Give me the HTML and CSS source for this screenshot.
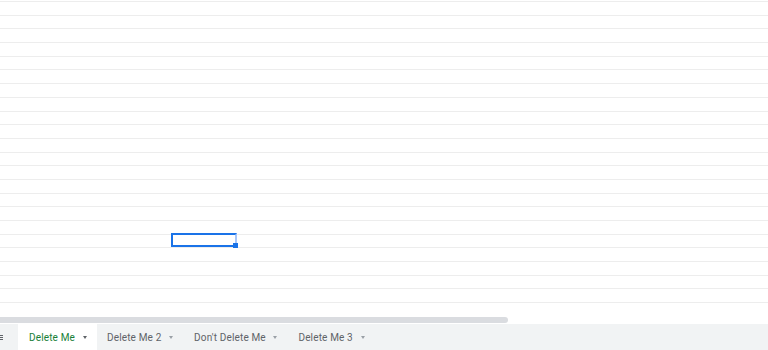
FILE: index.html
```html
<!DOCTYPE html>
<html lang="en">
<head>
    <meta charset="UTF-8">
    <meta name="viewport" content="width=device-width, initial-scale=1.0">
    <title>Sheet tabs</title>
    <link rel="stylesheet" href="styles.css">
</head>
<body>
    <div class="grid" id="grid">
        <!-- rows are added by the script below -->
    </div>

    <div class="scroll-track">
        <div class="scroll-thumb"></div>
    </div>

    <div class="tab-bar">
        <div class="all-sheets">
            <span></span><span></span><span></span>
        </div>
        <div class="tab active">Delete Me <span class="caret"></span></div>
        <div class="tab">Delete Me 2 <span class="caret"></span></div>
        <div class="tab">Don't Delete Me <span class="caret"></span></div>
        <div class="tab">Delete Me 3 <span class="caret"></span></div>
    </div>

    <script>
        // Build the empty grid rows, row 17 holds the selected cell
        const grid = document.getElementById("grid");
        for (let i = 0; i < 23; i++) {
            const row = document.createElement("div");
            row.className = "row";
            if (i === 17) {
                row.innerHTML = '<div class="selected"><span class="handle"></span></div>';
            }
            grid.appendChild(row);
        }
    </script>
</body>
</html>
```

FILE: styles.css
```css
body {
    font-family: Roboto, "Liberation Sans", Arial, sans-serif;
    background-color: #fff;
    margin: 0;
    padding: 0;
    width: 768px;
    height: 350px;
    overflow: hidden;
}
.grid {
    height: 316px;
    padding-top: 1px;
    box-sizing: border-box;
    overflow: hidden;
}
.row {
    height: 13.7px;
    box-sizing: border-box;
    border-top: 1px solid #ededed;
    display: flex;
}
.selected {
    margin-left: 171px;
    margin-top: -2px;
    width: 66px;
    height: 14px;
    border: 2px solid #1a73e8;
    border-right-color: #a8c7fa;
    box-sizing: border-box;
    position: relative;
}
.handle {
    position: absolute;
    right: -3px;
    bottom: -3px;
    width: 5px;
    height: 5px;
    background-color: #1a73e8;
}
.scroll-track {
    height: 8px;
    padding-top: 1px;
    box-sizing: border-box;
    background-color: #fff;
}
.scroll-thumb {
    width: 508px;
    height: 6px;
    background-color: #dadce0;
    border-radius: 0 3px 3px 0;
}
.tab-bar {
    height: 26px;
    background-color: #f1f3f4;
    display: flex;
    align-items: stretch;
}
.all-sheets {
    width: 18px;
    display: flex;
    flex-direction: column;
    justify-content: center;
    gap: 1px;
    margin-left: -1px;
}
.all-sheets span {
    display: block;
    width: 4px;
    height: 1px;
    background-color: #5f6368;
}
.tab {
    display: flex;
    align-items: center;
    padding: 0 11px 0 10px;
    font-size: 10px;
    color: #5f6368;
    white-space: pre;
    letter-spacing: 0.15px;
}
.tab.active {
    background-color: #fff;
    color: #188038;
    width: 79px;
    box-sizing: border-box;
    padding-left: 11px;
    margin-left: 1px;
}
.caret {
    display: inline-block;
    margin-left: 5px;
    width: 0;
    height: 0;
    border-left: 2.5px solid transparent;
    border-right: 2.5px solid transparent;
    border-top: 3px solid #5f6368;
}
.tab:not(.active) .caret {
    border-top-color: #9aa0a6;
}
```
